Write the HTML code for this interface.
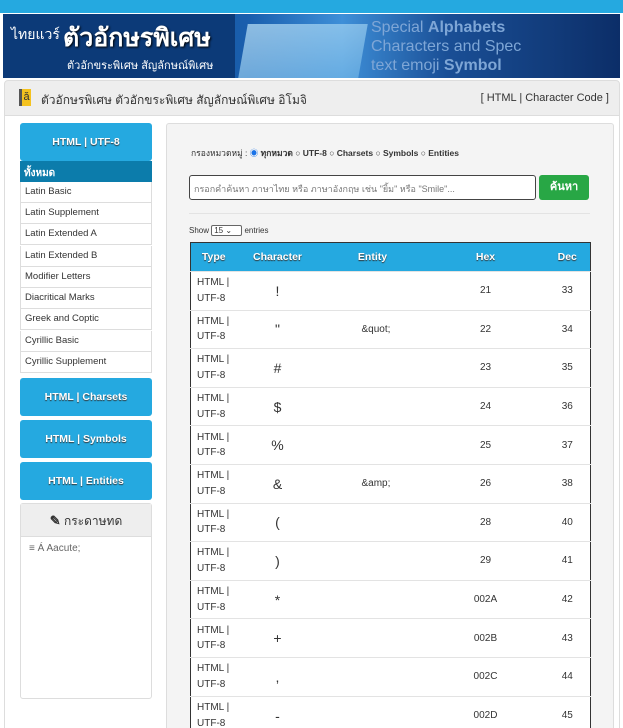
<!DOCTYPE html>
<html><head><meta charset="utf-8">
<style>
*{box-sizing:border-box;margin:0;padding:0}
html,body{width:623px;height:728px;overflow:hidden}
body{background:#fff;font-family:"Liberation Sans","Noto Sans CJK SC",sans-serif;font-size:10px;color:#333;position:relative}
.a{position:absolute}
.topbar{left:0;top:0;width:623px;height:13px;background:#25a9e0}
.banner{left:3px;top:14px;width:617px;height:64px;background:linear-gradient(90deg,#0d3d7a 0%,#14509a 25%,#1a5fae 40%,#3e8fd8 55%,#1a4f96 72%,#0c2e68 100%);overflow:hidden}
.hdr{left:4px;top:80px;width:616px;height:36px;background:#eee;border:1px solid #ddd;border-radius:4px 4px 0 0}
.wrap{left:4px;top:115px;width:616px;height:620px;border:1px solid #ddd;border-top:none}
.side{left:20px;width:132px}
.btn{background:#25a9e0;color:#fff;font-weight:bold;font-size:10.5px;text-align:center;border-radius:3px;text-shadow:0 1px 1px #333}
.li{left:20px;width:132px;height:21.2px;border:1px solid #ddd;border-top:none;background:#fff;font-size:9.5px;padding:4px 0 0 4px;color:#333}
.main{left:166px;top:123px;width:448px;height:620px;background:#f4f4f4;border:1px solid #ddd;border-radius:3px}
.tw{position:absolute;left:190px;top:242px;width:401px;height:486px;overflow:hidden}
table{border-collapse:collapse;width:401px;border:1px solid #333;border-bottom:none;background:#fff;table-layout:fixed}
th{background:#25a9e0;color:#fff;font-size:10.5px;height:29px;text-shadow:0 1px 1px #333}
td{height:38.6px;border-top:1px solid #e3e3e3;font-size:10px;vertical-align:middle}
td.t{padding-left:6px;line-height:1.55}
td.c{font-size:14px;text-align:center}
td.e{padding-left:43px}
td.h,td.d{text-align:center}
</style></head><body>
<div class="a topbar"></div>
<div class="a banner">
 <div class="a" style="left:0;top:0;width:232px;height:64px;background:#0c3a78"></div>
 <div class="a" style="left:8px;top:10px;color:#fff;font-size:14px">ไทยแวร์</div>
 <div class="a" style="left:60px;top:4px;color:#fff;font-size:25px;font-weight:bold;text-shadow:1px 1px 2px #000">ตัวอักษรพิเศษ</div>
 <div class="a" style="left:64px;top:42px;color:#fff;font-size:11px">ตัวอักขระพิเศษ สัญลักษณ์พิเศษ</div>
 <div class="a" style="left:240px;top:10px;width:120px;height:54px;background:linear-gradient(160deg,#bfe4f8,#6fb4e6);opacity:.7;transform:skewX(-10deg)"></div>
 <div class="a" style="left:368px;top:4px;color:#7ea6d6;font-size:16px;line-height:19px">Special <b>Alphabets</b><br>Characters and Spec<br>text emoji <b>Symbol</b></div>
</div>
<div class="a wrap"></div>
<div class="a hdr">
 <div class="a" style="left:14px;top:8px;width:12px;height:17px;background:#f4c21f;border-left:3px solid #555;font-size:11px;color:#333;text-align:center;line-height:17px">ă</div>
 <div class="a" style="left:36px;top:10px;font-size:12px;color:#333">ตัวอักษรพิเศษ ตัวอักขระพิเศษ สัญลักษณ์พิเศษ อิโมจิ</div>
 <div class="a" style="right:10px;top:11px;font-size:11px;color:#333">[ HTML | Character Code ]</div>
</div>
<div class="a btn side" style="top:123px;height:38px;line-height:38px">HTML | UTF-8</div>
<div class="a side" style="top:161px;height:21px;background:#0c7cab;color:#fff;font-weight:bold;padding:5px 0 0 4px;font-size:10px">ทั้งหมด</div>
<div class="a li" style="top:182px">Latin Basic</div>
<div class="a li" style="top:203px">Latin Supplement</div>
<div class="a li" style="top:224px">Latin Extended A</div>
<div class="a li" style="top:246px">Latin Extended B</div>
<div class="a li" style="top:267px">Modifier Letters</div>
<div class="a li" style="top:288px">Diacritical Marks</div>
<div class="a li" style="top:309px">Greek and Coptic</div>
<div class="a li" style="top:331px">Cyrillic Basic</div>
<div class="a li" style="top:352px">Cyrillic Supplement</div>
<div class="a btn side" style="top:378px;height:38px;line-height:38px">HTML | Charsets</div>
<div class="a btn side" style="top:420px;height:38px;line-height:38px">HTML | Symbols</div>
<div class="a btn side" style="top:462px;height:38px;line-height:38px">HTML | Entities</div>
<div class="a side" style="top:503px;height:196px;border:1px solid #ddd;background:#fff;border-radius:3px">
 <div style="height:33px;background:#eee;border-bottom:1px solid #ddd;text-align:center;line-height:33px;font-size:12px;color:#333"><b style="font-size:13px">✎</b> กระดาษทด</div>
 <div style="padding:6px 8px;font-size:10px;color:#666">≡ Á Aacute;</div>
</div>
<div class="a main"></div>
<div class="a" style="left:191px;top:146px;font-size:8.5px;color:#333;white-space:nowrap">กรองหมวดหมู่ : <span style="color:#1a73e8">◉</span> <b>ทุกหมวด</b> ○ <b>UTF-8</b> ○ <b>Charsets</b> ○ <b>Symbols</b> ○ <b>Entities</b></div>
<div class="a" style="left:189px;top:175px;width:347px;height:25px;border:1px solid #444;border-radius:3px;background:#fff;font-size:9px;color:#777;padding:6px 4px">กรอกคำค้นหา ภาษาไทย หรือ ภาษาอังกฤษ เช่น "ยิ้ม" หรือ "Smile"...</div>
<div class="a" style="left:539px;top:175px;width:50px;height:25px;background:#28a745;border-radius:3px;color:#fff;font-weight:bold;font-size:11px;text-align:center;line-height:25px">ค้นหา</div>
<div class="a" style="left:189px;top:213px;width:401px;height:1px;background:#e3e3e3"></div>
<div class="a" style="left:189px;top:225px;font-size:8px;color:#333">Show <span style="display:inline-block;border:1px solid #666;border-radius:2px;background:#fff;width:31px;height:11px;line-height:9px;padding-left:2px">15 ⌄</span> entries</div>
<div class="tw"><table>
<colgroup><col style="width:46px"><col style="width:82px"><col style="width:108px"><col style="width:118px"><col></colgroup>
<tr><th>Type</th><th>Character</th><th>Entity</th><th>Hex</th><th>Dec</th></tr>
<tr><td class="t">HTML |<br>UTF-8</td><td class="c">!</td><td class="e"></td><td class="h">21</td><td class="d">33</td></tr>
<tr><td class="t">HTML |<br>UTF-8</td><td class="c">"</td><td class="e">&amp;quot;</td><td class="h">22</td><td class="d">34</td></tr>
<tr><td class="t">HTML |<br>UTF-8</td><td class="c">#</td><td class="e"></td><td class="h">23</td><td class="d">35</td></tr>
<tr><td class="t">HTML |<br>UTF-8</td><td class="c">$</td><td class="e"></td><td class="h">24</td><td class="d">36</td></tr>
<tr><td class="t">HTML |<br>UTF-8</td><td class="c">%</td><td class="e"></td><td class="h">25</td><td class="d">37</td></tr>
<tr><td class="t">HTML |<br>UTF-8</td><td class="c">&amp;</td><td class="e">&amp;amp;</td><td class="h">26</td><td class="d">38</td></tr>
<tr><td class="t">HTML |<br>UTF-8</td><td class="c">(</td><td class="e"></td><td class="h">28</td><td class="d">40</td></tr>
<tr><td class="t">HTML |<br>UTF-8</td><td class="c">)</td><td class="e"></td><td class="h">29</td><td class="d">41</td></tr>
<tr><td class="t">HTML |<br>UTF-8</td><td class="c">*</td><td class="e"></td><td class="h">002A</td><td class="d">42</td></tr>
<tr><td class="t">HTML |<br>UTF-8</td><td class="c">+</td><td class="e"></td><td class="h">002B</td><td class="d">43</td></tr>
<tr><td class="t">HTML |<br>UTF-8</td><td class="c">,</td><td class="e"></td><td class="h">002C</td><td class="d">44</td></tr>
<tr><td class="t">HTML |<br>UTF-8</td><td class="c">-</td><td class="e"></td><td class="h">002D</td><td class="d">45</td></tr>
</table></div>
</body></html>
